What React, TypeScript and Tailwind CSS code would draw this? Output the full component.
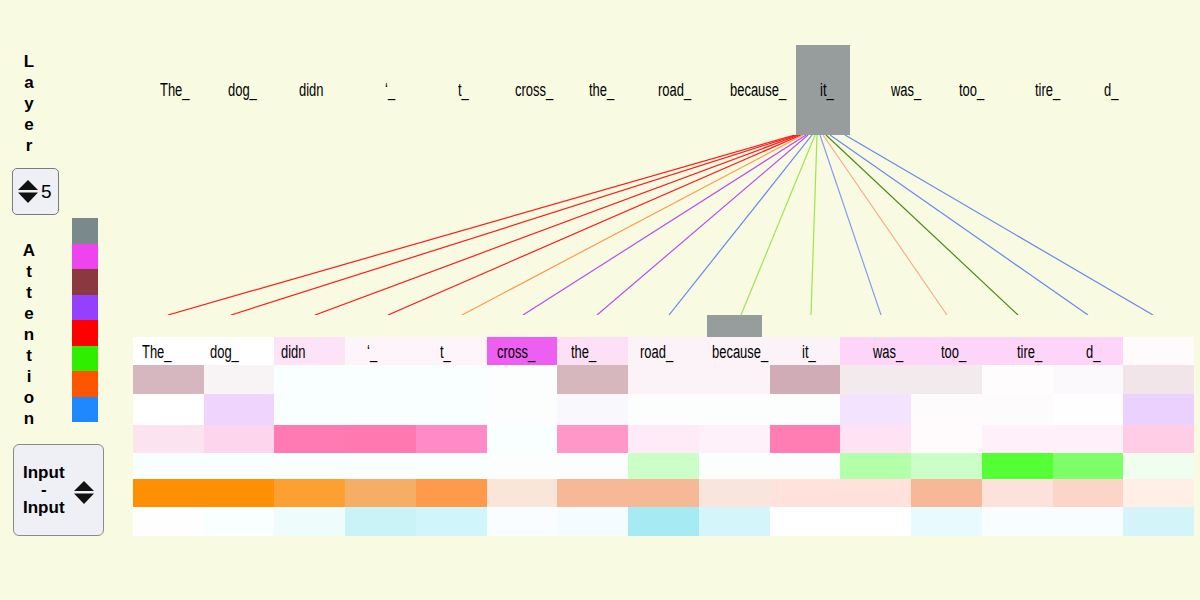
const tokens = ["The_", "dog_", "didn", "‘_", "t_", "cross_", "the_", "road_", "because_", "it_", "was_", "too_", "tire_", "d_"];

// left offset of each token's text inside its column
const offsets = [
  "pl-[9px]", "pl-[6px]", "pl-[7px]", "pl-[22px]", "pl-[24px]", "pl-[10px]", "pl-[14px]",
  "pl-[12px]", "pl-[13px]", "pl-[32px]", "pl-[33px]", "pl-[30px]", "pl-[35px]", "pl-[33px]",
];

const headerBg = [
  "bg-[#ffffff]", "bg-[#ffffff]", "bg-[#fde3f8]", "bg-[#fef5fb]", "bg-[#fef5fb]", "bg-[#ee5ef0]", "bg-[#fde0f5]",
  "bg-[#fcf3f8]", "bg-[#fcf3f8]", "bg-[#fcf3f8]", "bg-[#fdd5f9]", "bg-[#fdd5f9]", "bg-[#fdd5f9]", "bg-[#fdd5f9]", "bg-[#fffbfc]",
];

const rows: { h: string; cells: string[] }[] = [
  {
    h: "h-[29px]",
    cells: ["bg-[#d6b7bf]", "bg-[#f8f4f6]", "bg-[#f9fefe]", "bg-[#f9fefe]", "bg-[#f9fefe]", "bg-[#fcfefe]", "bg-[#d6b7be]", "bg-[#fbf3f7]", "bg-[#fbf3f7]", "bg-[#cfacb6]", "bg-[#f3eaee]", "bg-[#f3eaee]", "bg-[#fffcfd]", "bg-[#fbf9fb]", "bg-[#f1e5ea]"],
  },
  {
    h: "h-[31px]",
    cells: ["bg-[#ffffff]", "bg-[#efd5fe]", "bg-[#f9fefe]", "bg-[#f9fefe]", "bg-[#f9fefe]", "bg-[#fcfefe]", "bg-[#f8f8fd]", "bg-[#fcfefe]", "bg-[#fcfefe]", "bg-[#fcfefe]", "bg-[#f4e3fe]", "bg-[#fefbfd]", "bg-[#fefbfd]", "bg-[#fefefe]", "bg-[#ebd2fe]"],
  },
  {
    h: "h-[28px]",
    cells: ["bg-[#fce3f0]", "bg-[#fdd6ee]", "bg-[#ff7ab2]", "bg-[#ff78af]", "bg-[#ff8ac6]", "bg-[#f9fefe]", "bg-[#ff97c8]", "bg-[#ffebf7]", "bg-[#fef1f9]", "bg-[#ff7db3]", "bg-[#ffe3f5]", "bg-[#fffbfd]", "bg-[#fff0f9]", "bg-[#fff0f9]", "bg-[#ffcde6]"],
  },
  {
    h: "h-[26px]",
    cells: ["bg-[#f9fefe]", "bg-[#f9fefe]", "bg-[#f9fefe]", "bg-[#f9fefe]", "bg-[#f9fefe]", "bg-[#fcfefe]", "bg-[#fcfefe]", "bg-[#ccfec7]", "bg-[#fcfefe]", "bg-[#fcfefe]", "bg-[#b4ffaa]", "bg-[#ccfec7]", "bg-[#55ff36]", "bg-[#7cff68]", "bg-[#effeee]"],
  },
  {
    h: "h-[28px]",
    cells: ["bg-[#ff8f03]", "bg-[#ff8f03]", "bg-[#fca032]", "bg-[#f6ad66]", "bg-[#ff9a4a]", "bg-[#fae6d9]", "bg-[#f7b897]", "bg-[#f7b897]", "bg-[#f8e5de]", "bg-[#ffe2dc]", "bg-[#ffe2dc]", "bg-[#f7b897]", "bg-[#fce2da]", "bg-[#fad5c8]", "bg-[#ffefe7]"],
  },
  {
    h: "h-[29px]",
    cells: ["bg-[#fefefe]", "bg-[#f9feff]", "bg-[#eefcfb]", "bg-[#c9f3f7]", "bg-[#d0f5fa]", "bg-[#f9fdff]", "bg-[#f5fcff]", "bg-[#a6eaf4]", "bg-[#d4f5f9]", "bg-[#ffffff]", "bg-[#ffffff]", "bg-[#e8fafe]", "bg-[#f8feff]", "bg-[#f8feff]", "bg-[#d3f5fa]"],
  },
];

const swatches = [
  "bg-[#7a8a8a]", "bg-[#ee44f0]", "bg-[#8a3a3e]", "bg-[#9540fe]",
  "bg-[#ff0000]", "bg-[#30ee00]", "bg-[#ff5500]", "bg-[#2088ff]",
];

// attention lines: start x on the query box, end x above each key column (page coords)
const links = [
  { x1: 795, x2: 168, c: "#ff1a1a" },
  { x1: 797, x2: 231, c: "#ff1a1a" },
  { x1: 799, x2: 315, c: "#ff1a1a" },
  { x1: 801, x2: 388, c: "#ff1a1a" },
  { x1: 803, x2: 462, c: "#ff9a4a" },
  { x1: 806, x2: 523, c: "#b94cf0" },
  { x1: 808, x2: 597, c: "#b94cf0" },
  { x1: 812, x2: 669, c: "#6688ee" },
  { x1: 815, x2: 741, c: "#9ee64c" },
  { x1: 817, x2: 811, c: "#9ee64c" },
  { x1: 820, x2: 881, c: "#8898f8" },
  { x1: 823, x2: 947, c: "#f8ae8c" },
  { x1: 826, x2: 1018, c: "#4a8a10" },
  { x1: 830, x2: 1088, c: "#6688ee" },
  { x1: 845, x2: 1153, c: "#6688ee" },
];

function UpDown({ className }: { className?: string }) {
  return (
    <svg className={className} width="20" height="23" viewBox="0 0 20 23">
      <path d="M10 0 L20 10 L0 10 Z" fill="#111" />
      <path d="M0 12.5 L20 12.5 L10 23 Z" fill="#111" />
    </svg>
  );
}

function VerticalWord({ word }: { word: string }) {
  return (
    <div className="w-[34px] flex flex-col items-center text-[17px] font-bold leading-[21px]">
      {word.split("").map((ch, i) => (
        <span key={i}>{ch}</span>
      ))}
    </div>
  );
}

// the token font is a narrow face; squeeze the regular one to match
function Tok({ text }: { text: string }) {
  return <span className="inline-block origin-left scale-x-[0.72] whitespace-nowrap">{text}</span>;
}

export default function App() {
  return (
    <div className="w-[1200px] h-[600px] bg-[#f8fbe2] flex overflow-hidden text-black font-['Liberation_Sans',Arial,sans-serif]">
      <aside className="w-[133px] shrink-0 pl-[12px] pt-[51px] flex flex-col">
        <VerticalWord word="Layer" />
        <div className="mt-[12px] w-[47px] h-[47px] rounded-[5px] border border-[#7b7b7b] bg-[#eef0f5] flex items-center pl-[5px] gap-[3px]">
          <UpDown />
          <span className="text-[19px] leading-none">5</span>
        </div>
        <div className="mt-[3px] flex">
          <div className="pt-[22px]">
            <VerticalWord word="Attention" />
          </div>
          <div className="ml-[26px] flex flex-col">
            {swatches.map((s) => (
              <div key={s} className={`w-[26px] h-[25.5px] ${s}`} />
            ))}
          </div>
        </div>
        <div className="mt-[15px] ml-px w-[91px] h-[92px] rounded-[6px] border border-[#8a8a8a] bg-[#eef0f5] flex items-center pl-[9px] gap-[9px]">
          <div className="flex flex-col items-center text-[17px] font-bold leading-[17.5px]">
            <span>Input</span>
            <span>-</span>
            <span>Input</span>
          </div>
          <UpDown className="mt-[4px]" />
        </div>
      </aside>

      <main className="flex flex-col pt-[45px] text-[18px]">
        <div className="ml-[18px] w-[1061px] h-[90px] grid grid-cols-15">
          {tokens.map((t, i) =>
            t === "it_" ? (
              <div key={i} className="mx-[8px] bg-[#979c9c] flex items-center pl-[24px]">
                <Tok text={t} />
              </div>
            ) : (
              <div key={i} className={`flex items-center ${offsets[i]}`}>
                <Tok text={t} />
              </div>
            )
          )}
        </div>

        <svg width="1067" height="180" viewBox="133 135 1067 180" className="block">
          {links.map((l, i) => (
            <line key={i} x1={l.x1} y1={135} x2={l.x2} y2={315} stroke={l.c} strokeWidth={1.2} />
          ))}
        </svg>

        <div className="w-[1061px] h-[22px] grid grid-cols-15">
          <div className="col-start-9 mx-[8px] bg-[#979c9c]" />
        </div>

        <div className="w-[1061px] flex flex-col">
          <div className="h-[28px] grid grid-cols-15">
            {headerBg.map((bg, i) => (
              <div key={i} className={`${bg} leading-[31px] ${offsets[i] ?? ""}`}>
                {tokens[i] ? <Tok text={tokens[i]} /> : null}
              </div>
            ))}
          </div>
          {rows.map((r, ri) => (
            <div key={ri} className={`${r.h} grid grid-cols-15`}>
              {r.cells.map((c, ci) => (
                <div key={ci} className={c} />
              ))}
            </div>
          ))}
        </div>
      </main>
    </div>
  );
}
